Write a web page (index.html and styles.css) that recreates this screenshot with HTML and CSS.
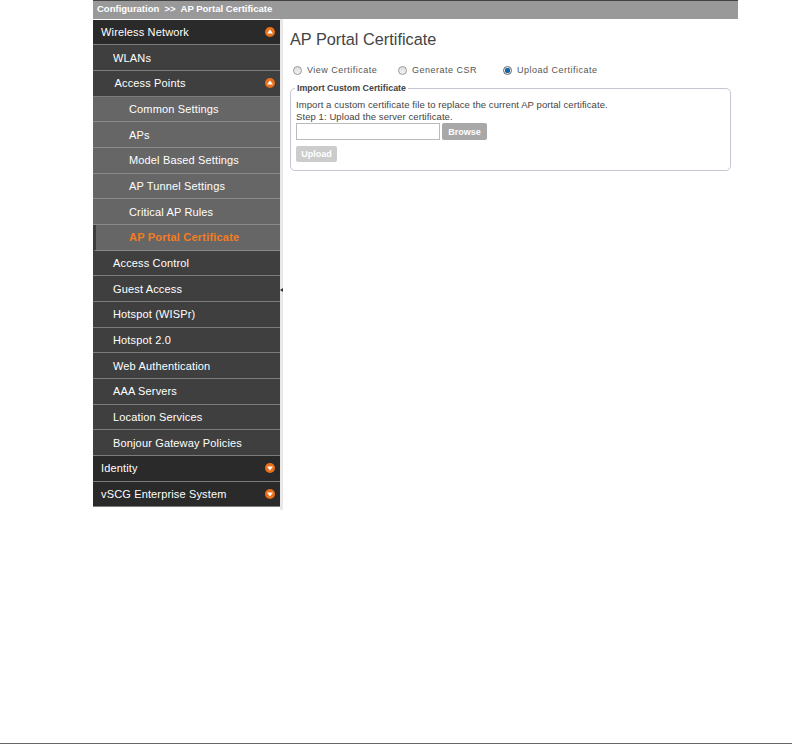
FILE: index.html
```html
<!DOCTYPE html>
<html lang="en">
<head>
<meta charset="utf-8">
<title>AP Portal Certificate</title>
<link rel="stylesheet" href="styles.css">
</head>
<body>
<div class="page">
  <div class="app">
    <div class="crumb">Configuration &nbsp;&gt;&gt;&nbsp; AP Portal Certificate</div>
    <div class="columns">
      <nav class="menu">
        <a class="row l1">Wireless Network<svg class="ico" viewBox="0 0 10 10"><circle cx="5" cy="5" r="5" fill="#e8701a"/><path d="M5 2.5 8 6.5H2Z" fill="#fff"/></svg></a>
        <a class="row l2">WLANs</a>
        <a class="row l2 shifted">Access Points<svg class="ico" viewBox="0 0 10 10"><circle cx="5" cy="5" r="5" fill="#e8701a"/><path d="M5 2.5 8 6.5H2Z" fill="#fff"/></svg></a>
        <a class="row l3">Common Settings</a>
        <a class="row l3">APs</a>
        <a class="row l3">Model Based Settings</a>
        <a class="row l3">AP Tunnel Settings</a>
        <a class="row l3">Critical AP Rules</a>
        <a class="row l3 active">AP Portal Certificate</a>
        <a class="row l2">Access Control</a>
        <a class="row l2">Guest Access</a>
        <a class="row l2">Hotspot (WISPr)</a>
        <a class="row l2">Hotspot 2.0</a>
        <a class="row l2">Web Authentication</a>
        <a class="row l2">AAA Servers</a>
        <a class="row l2">Location Services</a>
        <a class="row l2">Bonjour Gateway Policies</a>
        <a class="row l1">Identity<svg class="ico" viewBox="0 0 10 10"><circle cx="5" cy="5" r="5" fill="#e8701a"/><path d="M5 7.5 2 3.5H8Z" fill="#fff"/></svg></a>
        <a class="row l1">vSCG Enterprise System<svg class="ico" viewBox="0 0 10 10"><circle cx="5" cy="5" r="5" fill="#e8701a"/><path d="M5 7.5 2 3.5H8Z" fill="#fff"/></svg></a>
      </nav>
      <div class="splitter"><span class="arrow"></span></div>
      <main class="content">
        <h1 class="title">AP Portal Certificate</h1>
        <div class="choices">
          <label class="choice c1"><span class="radio"></span>View Certificate</label>
          <label class="choice c2"><span class="radio"></span>Generate CSR</label>
          <label class="choice"><span class="radio on"></span>Upload Certificate</label>
        </div>
        <fieldset class="panel">
          <legend class="legend">Import Custom Certificate</legend>
          <p class="line">Import a custom certificate file to replace the current AP portal certificate.</p>
          <p class="line">Step 1: Upload the server certificate.</p>
          <div class="file">
            <input class="path" type="text">
            <button class="btn browse" type="button">Browse</button>
          </div>
          <button class="btn upload" type="button">Upload</button>
        </fieldset>
      </main>
    </div>
  </div>
  <div class="rule"></div>
</div>
</body>
</html>
```
FILE: styles.css
```css
* { box-sizing: border-box; }
html, body { margin: 0; padding: 0; background: #fff; }
body { font-family: "Liberation Sans", Arial, sans-serif; }
.page { height: 744px; display: flex; flex-direction: column; justify-content: space-between; }
.app { width: 645px; margin-left: 93px; }
.crumb {
  height: 19px; background: #999; border-top: 1px solid #444; color: #fff;
  font-size: 9.5px; font-weight: bold; line-height: 16px; padding-left: 4px;
}
.columns { display: flex; align-items: flex-start; }
.menu { width: 187px; flex: none; padding-top: 0.7px; }
.row {
  display: flex; align-items: center; justify-content: space-between;
  height: 25.68px; color: #fff; font-size: 11px; letter-spacing: 0.15px;
  border-bottom: 1px solid #7c7c7c; padding-right: 5px;
}
.l1 { background: #2a2a2a; padding-left: 8px; }
.l2 { background: #3f3f3f; padding-left: 20px; }
.shifted { padding-left: 21.5px; }
.l3 { background: #666; padding-left: 36px; border-bottom-color: #8a8a8a; }
.active { color: #f47c20; font-weight: bold; border-left: 3px solid #3c3c3c; padding-left: 33px; letter-spacing: 0.2px; }
.ico { width: 10px; height: 10px; flex: none; }
.splitter { width: 3px; height: 491px; flex: none; background: #e8e8e8; display: flex; align-items: center; }
.arrow { width: 0; height: 0; border: 2.5px solid transparent; border-right: 3px solid #333; border-left: 0; margin-top: 50px; }
.content { flex: 1; padding: 10px 7px 0 7px; }
.title { margin: 0; font-size: 16.3px; font-weight: normal; color: #444; line-height: 21px; }
.choices { display: flex; margin-top: 13px; height: 14px; align-items: center; }
.choice { display: flex; align-items: center; color: #555; font-size: 9px; letter-spacing: 0.5px; padding-left: 3px; }
.c1 { width: 105px; }
.c2 { width: 105px; }
.radio {
  width: 9px; height: 9px; border-radius: 50%; border: 1px solid #999;
  background: linear-gradient(#ddd, #f4f4f4); margin-right: 5px; flex: none;
}
.radio.on { background: radial-gradient(circle, #1668a8 0 2.5px, #eee 3px); border-color: #666; }
.panel {
  margin: 6px 0 0 0; width: 441px; height: 88px; padding: 0 5px;
  border: 1px solid #c6c6d4; border-radius: 5px; min-width: 0;
}
.legend { font-size: 8.9px; font-weight: bold; color: #444; padding: 0 2px; margin-left: -1px; line-height: 10px; }
.line { margin: 0; font-size: 9.5px; line-height: 11.5px; color: #444; letter-spacing: 0.08px; }
.line:first-of-type { margin-top: 6px; }
.file { display: flex; gap: 2px; margin-top: 1px; }
.path { width: 144px; height: 17px; border: 1px solid #bbb; background: #fff; padding: 0; }
.btn { border: 0; border-radius: 2px; color: #fff; font-family: inherit; font-weight: bold; font-size: 9px; padding: 0; }
.browse { width: 45px; height: 17px; background: #a8a8a8; }
.upload { display: block; width: 41px; height: 16px; margin-top: 6px; background: #ccc; }
.rule { height: 1px; background: #666; }
```
